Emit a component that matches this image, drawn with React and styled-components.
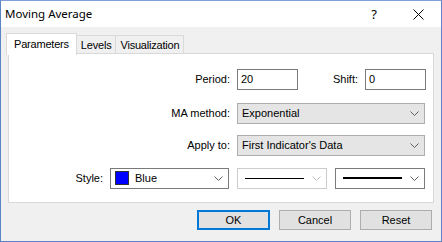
import React from "react";
import styled, { createGlobalStyle } from "styled-components";

const Global = createGlobalStyle`
  * { box-sizing: border-box; }
  body {
    margin: 0;
    background: #f0f0f0;
    font-family: "Liberation Sans", Arial, sans-serif;
    font-size: 11px;
    color: #000;
  }
`;

const Window = styled.div`
  width: 442px;
  height: 242px;
  border: 1px solid #5a84c6;
  border-top-color: #7fa0d4;
  background: #f0f0f0;
  display: flex;
  flex-direction: column;
`;

const TitleBar = styled.div`
  height: 26px;
  background: #fff;
  display: flex;
  align-items: center;
  padding-left: 4px;
  font-family: "Noto Sans", "Open Sans", sans-serif;
  font-size: 11.5px;
`;

const Title = styled.div`
  flex-grow: 1;
  padding-bottom: 1px;
`;

const Help = styled.div`
  width: 46px;
  text-align: center;
  font-size: 13px;
`;

const Close = styled.div`
  width: 42px;
  margin-right: 2px;
  height: 26px;
  display: flex;
  align-items: center;
  justify-content: center;
`;

const Body = styled.div`
  flex-grow: 1;
  padding: 6px 7px 0 7px;
  display: flex;
  flex-direction: column;
`;

const Tabs = styled.div`
  display: flex;
  align-items: flex-end;
  height: 20px;
  margin-left: -2px;
  position: relative;
  z-index: 1;
`;

const Tab = styled.div`
  height: ${(p) => (p.$active ? "22px" : "19px")};
  padding: 0 ${(p) => (p.$active ? "7px" : "4px")};
  display: flex;
  align-items: center;
  padding-bottom: ${(p) => (p.$active ? "2px" : "0")};
  background: ${(p) => (p.$active ? "#fff" : "#f0f0f0")};
  border: 1px solid #d9d9d9;
  border-bottom: ${(p) => (p.$active ? "none" : "1px solid #d9d9d9")};
  margin-left: ${(p) => (p.$first ? "0" : "-1px")};
  margin-bottom: ${(p) => (p.$active ? "-2px" : "-1px")};
  letter-spacing: -0.2px;
`;

const Panel = styled.div`
  height: 150px;
  width: 426px;
  background: #fff;
  border: 1px solid #d9d9d9;
  display: flex;
  flex-direction: column;
  padding-top: 15px;
`;

const Row = styled.div`
  display: flex;
  align-items: center;
  height: 20px;
  margin-top: ${(p) => p.$mt || 0}px;
`;

const Label = styled.div`
  width: ${(p) => p.$w}px;
  text-align: right;
  padding-right: 7px;
`;

const Input = styled.div`
  width: ${(p) => p.$w}px;
  height: 21px;
  border: 1px solid #7a7a7a;
  background: #fff;
  padding: 0 3px;
  display: flex;
  align-items: center;
`;

const Select = styled.div`
  width: ${(p) => p.$w}px;
  height: 21px;
  border: 1px solid ${(p) => (p.$light ? "#cccccc" : p.$gray ? "#adadad" : "#7a7a7a")};
  background: ${(p) => (p.$gray ? "#e5e5e5" : "#fff")};
  display: flex;
  align-items: center;
  padding: 0 5px 0 4px;
  margin-right: ${(p) => p.$mr || 0}px;
`;

const SelectText = styled.div`
  flex-grow: 1;
  display: flex;
  align-items: center;
  gap: 6px;
`;

const Swatch = styled.div`
  width: 14px;
  height: 14px;
  background: #0000ff;
  border: 1px solid #303030;
`;

const LineSample = styled.div`
  width: 59px;
  height: ${(p) => p.$h}px;
  background: #000;
  margin-left: 3px;
`;

const Spacer = styled.div`
  flex-grow: 1;
`;

const Buttons = styled.div`
  display: flex;
  justify-content: flex-end;
  gap: 9px;
  padding-right: 2px;
  margin-top: 7px;
`;

const Button = styled.div`
  width: ${(p) => p.$w || 72}px;
  height: 20px;
  background: #e1e1e1;
  border: ${(p) => (p.$default ? "2px solid #0078d7" : "1px solid #adadad")};
  display: flex;
  align-items: center;
  justify-content: center;
`;

const Chevron = ({ light }) => (
  <svg width="9" height="5" viewBox="0 0 9 5" style={{ flexShrink: 0 }}>
    <path d="M0.5 0.5 L4.5 4.5 L8.5 0.5" fill="none" stroke={light ? "#c0c0c0" : "#606060"} strokeWidth="1" />
  </svg>
);

export default function App() {
  return (
    <>
      <Global />
      <Window>
        <TitleBar>
          <Title>Moving Average</Title>
          <Help>?</Help>
          <Close>
            <svg width="11" height="11" viewBox="0 0 11 11">
              <path d="M0.5 0.5 L10.5 10.5 M10.5 0.5 L0.5 10.5" stroke="#000" strokeWidth="1" />
            </svg>
          </Close>
        </TitleBar>
        <Body>
          <Tabs>
            <Tab $active $first>Parameters</Tab>
            <Tab>Levels</Tab>
            <Tab>Visualization</Tab>
          </Tabs>
          <Panel>
            <Row>
              <Label $w={228}>Period:</Label>
              <Input $w={61}>20</Input>
              <Label $w={67}>Shift:</Label>
              <Input $w={61}>0</Input>
            </Row>
            <Row $mt={14}>
              <Label $w={228}>MA method:</Label>
              <Select $w={188} $gray>
                <SelectText>Exponential</SelectText>
                <Chevron />
              </Select>
            </Row>
            <Row $mt={12}>
              <Label $w={228}>Apply to:</Label>
              <Select $w={188} $gray>
                <SelectText>First Indicator's Data</SelectText>
                <Chevron />
              </Select>
            </Row>
            <Row $mt={13}>
              <Label $w={101}>Style:</Label>
              <Select $w={119} $mr={8}>
                <SelectText>
                  <Swatch />
                  Blue
                </SelectText>
                <Chevron />
              </Select>
              <Select $w={90} $mr={8} $light>
                <LineSample $h={1} />
                <Spacer />
                <Chevron light />
              </Select>
              <Select $w={90}>
                <LineSample $h={2} />
                <Spacer />
                <Chevron />
              </Select>
            </Row>
          </Panel>
          <Buttons>
            <Button $default $w={73}>OK</Button>
            <Button>Cancel</Button>
            <Button>Reset</Button>
          </Buttons>
        </Body>
      </Window>
    </>
  );
}
